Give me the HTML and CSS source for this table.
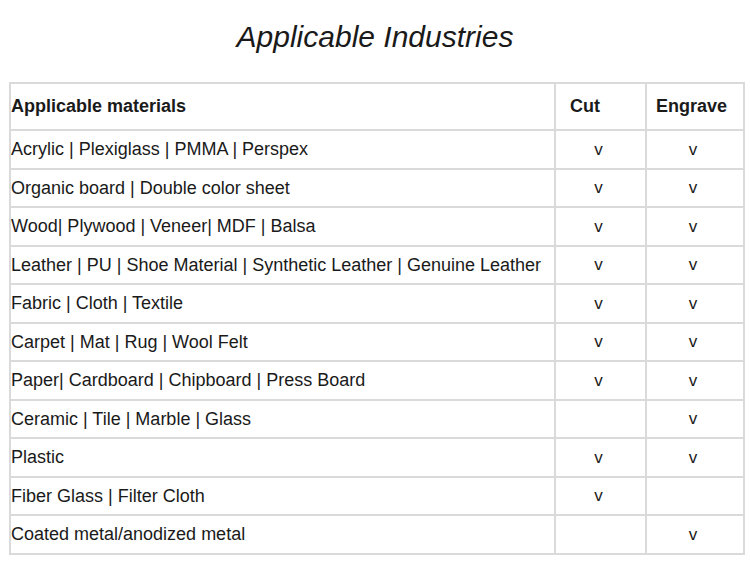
FILE: index.html
```html
<!DOCTYPE html>
<html>
<head>
<meta charset="utf-8">
<link rel="stylesheet" href="styles.css">
</head>
<body>
<h1 class="title">Applicable Industries</h1>
<table class="mat">
  <colgroup><col class="c1"><col class="c2"><col class="c3"></colgroup>
  <thead>
    <tr><th>Applicable materials</th><th class="hcut">Cut</th><th class="heng">Engrave</th></tr>
  </thead>
  <tbody>
    <tr><td>Acrylic | Plexiglass | PMMA | Perspex</td><td class="m">v</td><td class="m">v</td></tr>
    <tr><td>Organic board | Double color sheet</td><td class="m">v</td><td class="m">v</td></tr>
    <tr><td>Wood| Plywood | Veneer| MDF | Balsa</td><td class="m">v</td><td class="m">v</td></tr>
    <tr><td>Leather | PU | Shoe Material | Synthetic Leather | Genuine Leather</td><td class="m">v</td><td class="m">v</td></tr>
    <tr><td>Fabric | Cloth | Textile</td><td class="m">v</td><td class="m">v</td></tr>
    <tr><td>Carpet | Mat | Rug | Wool Felt</td><td class="m">v</td><td class="m">v</td></tr>
    <tr><td>Paper| Cardboard | Chipboard | Press Board</td><td class="m">v</td><td class="m">v</td></tr>
    <tr><td>Ceramic | Tile | Marble | Glass</td><td class="m"></td><td class="m">v</td></tr>
    <tr><td>Plastic</td><td class="m">v</td><td class="m">v</td></tr>
    <tr><td>Fiber Glass | Filter Cloth</td><td class="m">v</td><td class="m"></td></tr>
    <tr><td>Coated metal/anodized metal</td><td class="m"></td><td class="m">v</td></tr>
  </tbody>
</table>
</body>
</html>
```
FILE: styles.css
```css
html, body {
  margin: 0;
  padding: 0;
  background: #ffffff;
}
body {
  font-family: "Liberation Sans", Arial, sans-serif;
  color: #1a1a1a;
}
.title {
  margin: 17px 0 0 0;
  height: 65px;
  font-size: 30px;
  line-height: 40px;
  font-weight: normal;
  font-style: italic;
  text-align: center;
}
.mat {
  margin-left: 9px;
  width: 734px;
  border-collapse: collapse;
  table-layout: fixed;
}
.c1 { width: 545px; }
.c2 { width: 91px; }
.c3 { width: 98px; }
.mat th, .mat td {
  border: 2px solid #dadada;
  padding: 0;
  text-align: left;
  white-space: nowrap;
}
.mat th {
  height: 45px;
  font-size: 18px;
  font-weight: bold;
  vertical-align: middle;
}
.mat .hcut { padding-left: 14px; }
.mat .heng { padding-left: 9px; }
.mat td {
  height: 35.5px;
  font-size: 18px;
  vertical-align: middle;
  padding-top: 1px;
}
.mat td.m {
  text-align: center;
  font-size: 17px;
  padding-right: 4px;
}
```
